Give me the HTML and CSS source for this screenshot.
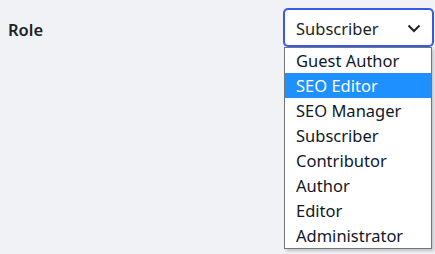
FILE: index.html
```html
<!DOCTYPE html>
<html lang="en">

<head>
    <meta charset="UTF-8">
    <meta name="viewport" content="width=device-width, initial-scale=1.0">
    <title>Role</title>
    <link rel="stylesheet" href="styles.css">
</head>

<body>
    <div class="row">
        <label class="row-label" for="role">Role</label>
        <div class="field">
            <div class="select" id="role">
                <span class="select-value">Subscriber</span>
                <svg class="chevron" width="16" height="16" viewBox="0 0 16 16">
                    <path d="M2.5 5.5 L8 11 L13.5 5.5" fill="none" stroke="#1d2327" stroke-width="2"/>
                </svg>
            </div>
            <ul class="options">
                <li>Guest Author</li>
                <li class="active">SEO Editor</li>
                <li>SEO Manager</li>
                <li>Subscriber</li>
                <li>Contributor</li>
                <li>Author</li>
                <li>Editor</li>
                <li>Administrator</li>
            </ul>
        </div>
    </div>
</body>

</html>
```

FILE: styles.css
```css
* {
    margin: 0;
    padding: 0;
    box-sizing: border-box;
}

body {
    font-family: "Noto Sans", "Open Sans", sans-serif;
    background-color: #f1f2f6;
    color: #1d2327;
    width: 435px;
    height: 254px;
    overflow: hidden;
}

.row {
    display: flex;
    justify-content: space-between;
    align-items: flex-start;
    padding: 9px 2px 0 8px;
}

.row-label {
    font-size: 16.5px;
    font-weight: 600;
    line-height: 38px;
    padding-top: 2px;
}

.field {
    position: relative;
    width: 149px;
}

.select {
    display: flex;
    align-items: center;
    justify-content: space-between;
    height: 37px;
    padding: 2px 10px 0 11px;
    background: #fff;
    border: 1px solid #3858e9;
    box-shadow: 0 0 0 1px #3858e9;
    border-radius: 4px;
    font-size: 16.5px;
}

.chevron {
    margin-top: -2px;
}

/* Dropdown list */
.options {
    position: absolute;
    top: 38px;
    left: 0;
    width: 148px;
    list-style: none;
    background: #fff;
    border: 1px solid #767676;
    box-shadow: 2px 2px 3px rgba(0, 0, 0, 0.2);
}

.options li {
    height: 25px;
    line-height: 25px;
    padding-left: 11px;
    font-size: 16.5px;
    color: #101828;
    white-space: nowrap;
}

.options li.active {
    background: #1e90ff;
    color: #fff;
}
```
